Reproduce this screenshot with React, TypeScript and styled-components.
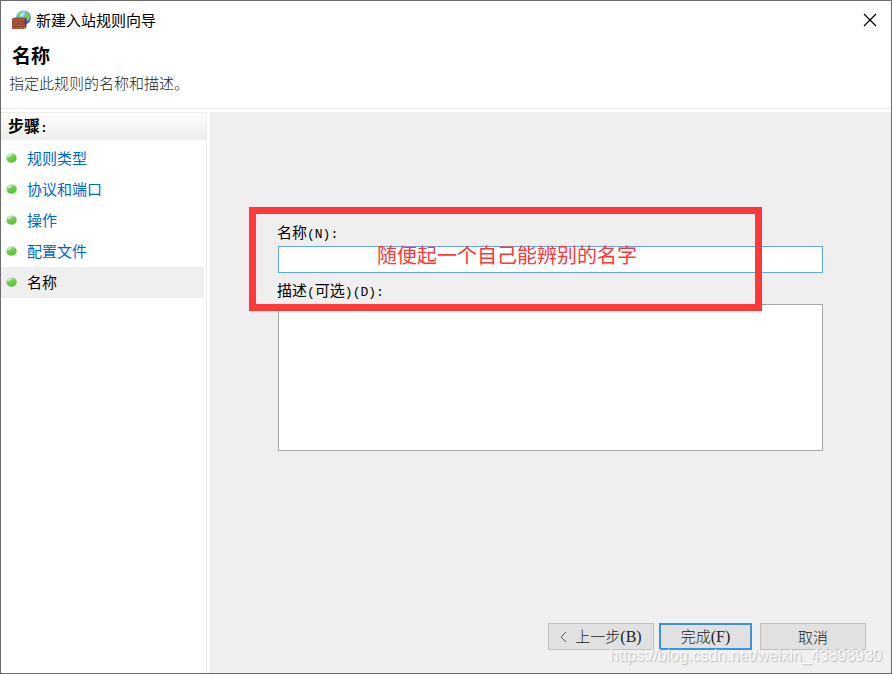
import React from "react";
import styled, { createGlobalStyle } from "styled-components";

const GlobalStyle = createGlobalStyle`
  *, *::before, *::after { box-sizing: border-box; }
  body {
    margin: 0;
    font-family: "Noto Sans CJK SC", sans-serif;
    font-size: 15px;
    color: #000;
  }
  button, input, textarea { font: inherit; }
`;

const Dialog = styled.main`
  position: relative;
  min-height: 100vh;
  display: flex;
  flex-direction: column;
  border: 1px solid #6b6b6d;
  background: #fff;
`;

const TitleBar = styled.header`
  display: flex;
  align-items: center;
  gap: 5px;
  height: 37px;
  padding: 0 14px 0 10px;
`;

const WindowTitle = styled.span`
  flex: 1;
  line-height: 20px;
`;

const CloseButton = styled.button`
  display: flex;
  padding: 0;
  border: 0;
  background: none;
`;

const Heading = styled.section`
  height: 71px;
  padding: 4px 8px 0;
  border-bottom: 1px solid #ececec;
`;

const PageTitle = styled.h1`
  margin: 0 0 5px;
  padding-left: 3px;
  font-size: 19px;
  line-height: 26px;
`;

const Summary = styled.p`
  margin: 0;
  font-weight: 300;
  line-height: 20px;
  color: #222;
`;

const Body = styled.div`
  flex: 1;
  display: flex;
  gap: 3px;
  padding-top: 3px;
`;

const Sidebar = styled.nav`
  width: 206px;
  flex: none;
  border-top: 1px solid #ececec;
  border-right: 1px solid #ececec;
`;

const StepsTitle = styled.h2`
  height: 27px;
  margin: 0 0 3px;
  padding-left: 7px;
  font-size: 16px;
  line-height: 24px;
  background: linear-gradient(#fdfdfd, #ededed);
`;

const StepList = styled.ol`
  margin: 0;
  padding: 0 2px 0 0;
  list-style: none;
`;

const Step = styled.li<{ $current?: boolean }>`
  display: flex;
  align-items: center;
  gap: 10px;
  height: 31px;
  padding: 0 5px;
  background: ${(p) => (p.$current ? "#efefef" : "transparent")};
`;

const StepLink = styled.a`
  padding-bottom: 2px;
  line-height: 20px;
  color: #0066cc;
  text-decoration: none;
  &[aria-current] { color: #000; }
`;

const Content = styled.section`
  flex: 1;
  display: flex;
  flex-direction: column;
  justify-content: space-between;
  padding: 111px 25px 23px 68px;
  background: #efefef;
`;

const Form = styled.form`
  position: relative;
  display: flex;
  flex-direction: column;
  margin-right: 43px;
`;

const Label = styled.label`
  height: 23px;
  margin-left: -1px;
  line-height: 18px;
`;

const Mono = styled.span`
  font-family: "Liberation Mono", monospace;
  font-size: 13px;
`;

const AccessKey = styled.span`
  font-family: "Liberation Serif", serif;
  font-size: 16px;
  font-weight: 400;
`;

const TextInput = styled.input`
  height: 27px;
  margin-bottom: 8px;
  padding: 2px 6px;
  border: 1px solid #62a7e0;
  background: #fff;
  outline: 0;
`;

const TextArea = styled.textarea`
  height: 147px;
  padding: 4px 6px;
  border: 1px solid #a8a8a8;
  background: #fff;
  resize: none;
  outline: 0;
`;

const Highlight = styled.div`
  position: absolute;
  top: -16px;
  left: -29px;
  right: 61px;
  height: 104px;
  border: 7px solid #fc3838;
  pointer-events: none;
`;

const HighlightText = styled.p`
  position: absolute;
  top: 26px;
  left: 121px;
  margin: 0;
  font-size: 20px;
  line-height: 30px;
  white-space: nowrap;
  color: #fc3838;
`;

const Actions = styled.footer`
  display: flex;
  justify-content: flex-end;
  gap: 8px;
`;

const ActionPair = styled.div`
  display: flex;
  gap: 5px;
`;

const Button = styled.button<{ $primary?: boolean }>`
  display: flex;
  align-items: center;
  justify-content: center;
  gap: 8px;
  width: ${(p) => (p.$primary ? "93px" : "106px")};
  height: 27px;
  padding: 0;
  border: ${(p) => (p.$primary ? "2px solid #3c93dc" : "1px solid #bfbfbf")};
  background: #e1e1e1;
  color: #222;
  font-weight: 300;
  line-height: 20px;
`;

const Watermark = styled.div`
  position: absolute;
  right: 9px;
  bottom: 7px;
  font-family: "Liberation Sans", sans-serif;
  font-size: 16px;
  line-height: 20px;
  color: rgba(255, 255, 255, 0.8);
  text-shadow: 1px 1px 1px rgba(0, 0, 0, 0.22);
  pointer-events: none;
`;

const FirewallIcon = () => (
  <svg width="20" height="20" viewBox="0 0 20 20" aria-hidden="true">
    <defs>
      <radialGradient id="globe" cx="0.4" cy="0.25" r="0.8">
        <stop offset="0" stopColor="#d4f2ff" />
        <stop offset="0.5" stopColor="#3fa0ea" />
        <stop offset="1" stopColor="#1a50b0" />
      </radialGradient>
    </defs>
    <circle cx="12.5" cy="7.700" r="7.300" fill="url(#globe)" />
    <path d="M8 3q2-2 4-2l-1 2-2 1-1 3-2-1q0-2 2-3zM14 2l3 1 2 4-1 3-2 1-1-3-2-2 2-2z" fill="#7ccb52" />
    <path d="M1 9l2-1.500h12L13.500 9v10H1z" fill="#b25a45" />
    <path d="M13.500 9L15.500 7.500v9.500l-2 2z" fill="#7c3024" />
    <path d="M1 9h12.500M1 11.500h12.500M1 14h12.500M1 16.500h12.500M5 9v2.500M10 9v2.500M3 11.500v2.500M7.500 11.500v2.500M12 11.500v2.500M5 14v2.500M10 14v2.500M3 16.500v2.500M7.500 16.500v2.500M12 16.500v2.500" stroke="#803a2e" strokeWidth="0.6" />
  </svg>
);

const Bullet = () => (
  <svg width="11" height="11" viewBox="0 0 11 11" aria-hidden="true">
    <defs>
      <linearGradient id="bullet" x1="0.15" y1="0" x2="0.6" y2="1">
        <stop offset="0" stopColor="#d2ead0" />
        <stop offset="0.5" stopColor="#6fcb55" />
        <stop offset="1" stopColor="#56c42c" />
      </linearGradient>
    </defs>
    <ellipse cx="5.5" cy="5" rx="5.2" ry="4.8" fill="url(#bullet)" />
    <path d="M1.2 4.5Q2 1 5.5 1q.5 2.500-4.300 3.500z" fill="#e0f2dc" opacity="0.7" />
  </svg>
);

const steps = ["规则类型", "协议和端口", "操作", "配置文件", "名称"];

export default function App() {
  return (
    <>
      <GlobalStyle />
      <Dialog>
        <TitleBar>
          <FirewallIcon />
          <WindowTitle>新建入站规则向导</WindowTitle>
          <CloseButton type="button" aria-label="关闭">
            <svg width="14" height="14" viewBox="0 0 14 14">
              <path d="M1 1l12 12M13 1L1 13" stroke="#000" strokeWidth="1.2" />
            </svg>
          </CloseButton>
        </TitleBar>
        <Heading>
          <PageTitle>名称</PageTitle>
          <Summary>指定此规则的名称和描述。</Summary>
        </Heading>
        <Body>
          <Sidebar>
            <StepsTitle>步骤<Mono>:</Mono></StepsTitle>
            <StepList>
              {steps.map((step, i) => {
                const current = i === steps.length - 1;
                return (
                  <Step key={step} $current={current}>
                    <Bullet />
                    <StepLink href="#" aria-current={current ? "step" : undefined}>{step}</StepLink>
                  </Step>
                );
              })}
            </StepList>
          </Sidebar>
          <Content>
            <Form>
              <Label htmlFor="rule-name">名称<Mono>(N):</Mono></Label>
              <TextInput id="rule-name" type="text" />
              <Label htmlFor="rule-description">
                描述<Mono>(</Mono>可选<Mono>)(D):</Mono>
              </Label>
              <TextArea id="rule-description" />
              <Highlight>
                <HighlightText>随便起一个自己能辨别的名字</HighlightText>
              </Highlight>
            </Form>
            <Actions>
              <ActionPair>
                <Button type="button">
                  <svg width="7" height="12" viewBox="0 0 7 12" aria-hidden="true">
                    <path d="M6 1L1 6l5 5" fill="none" stroke="#555" />
                  </svg>
                  <span>上一步<AccessKey>(B)</AccessKey></span>
                </Button>
                <Button type="button" $primary><span>完成<AccessKey>(F)</AccessKey></span></Button>
              </ActionPair>
              <Button type="button">取消</Button>
            </Actions>
          </Content>
        </Body>
        <Watermark>https://blog.csdn.net/weixin_43898930</Watermark>
      </Dialog>
    </>
  );
}
